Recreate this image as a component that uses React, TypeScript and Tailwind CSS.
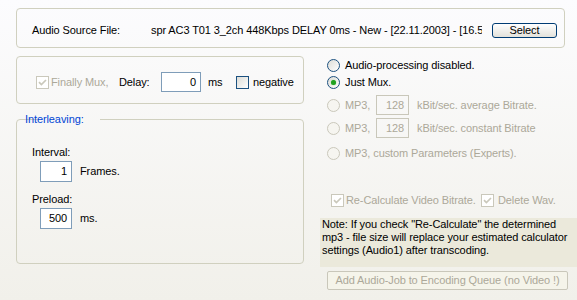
import React from 'react'

const gray = 'text-[#aca899]'

function Check({ checked, disabled }: { checked?: boolean; disabled?: boolean }) {
  return (
    <span
      className={`w-[13px] h-[13px] shrink-0 border flex items-center justify-center ${
        disabled ? 'border-[#cac8bb] bg-white' : 'border-[#1c5180] bg-gradient-to-br from-[#dcdcd7] to-white'
      }`}
    >
      {checked && (
        <svg width="9" height="9" viewBox="0 0 9 9">
          <path d="M1 4.2 L3.4 6.6 L8 2" fill="none" stroke={disabled ? '#cac8bb' : '#21a121'} strokeWidth="1.7" />
        </svg>
      )}
    </span>
  )
}

function Radio({ checked, disabled }: { checked?: boolean; disabled?: boolean }) {
  return (
    <span
      className={`w-[13px] h-[13px] shrink-0 rounded-full border flex items-center justify-center ${
        disabled ? 'border-[#cac8bb] bg-[#f6f5f0]' : 'border-[#1c5180] bg-gradient-to-br from-[#dcdcd7] to-white'
      }`}
    >
      {checked && <span className="w-[5px] h-[5px] rounded-full bg-[#21a121] shadow-[0_0_1px_#5fd35f]" />}
    </span>
  )
}

function Field({ value, w, h, disabled }: { value: string; w: string; h: string; disabled?: boolean }) {
  return (
    <span
      className={`${w} ${h} shrink-0 border flex items-center justify-end pr-[4px] ${
        disabled ? `border-[#c9c7ba] ${gray}` : 'border-[#7f9db9] bg-white'
      }`}
    >
      {value}
    </span>
  )
}

export default function App() {
  return (
    <div className="w-[577px] h-[300px] overflow-hidden pt-2 bg-gradient-to-b from-[#fcfcfe] to-[#f1f0ea] text-[11px] leading-[13px] tracking-[-0.1px] text-black font-['Liberation_Sans',Arial,sans-serif]">
      <div className="ml-4 w-[549px] h-10 border border-[#d0d0bf] rounded-[4px] flex items-center pt-[4px] pl-[15px]">
        <span className="w-[119px] shrink-0">Audio Source File:</span>
        <span className="w-[331px] shrink-0 overflow-hidden whitespace-nowrap">
          spr AC3 T01 3_2ch 448Kbps DELAY 0ms - New - [22.11.2003] - [16.5
        </span>
        <button className="ml-[10px] w-[65px] h-[15px] mt-[1px] rounded-[3px] border border-[#003c74] bg-gradient-to-b from-white to-[#e3e2db] flex items-center justify-center leading-none">
          Select
        </button>
      </div>

      <div className="flex">
        <div className="ml-4 w-[288px] shrink-0">
          <div className="mt-2 h-12 border border-[#d0d0bf] rounded-[4px] flex items-center pt-[4px] pl-[19px]">
            <Check checked disabled />
            <span className={`ml-[2px] w-[68px] ${gray}`}>Finally Mux,</span>
            <span className="w-[42px]">Delay:</span>
            <Field value="0" w="w-[40px]" h="h-[20px]" />
            <span className="ml-[7px] w-[28px]">ms</span>
            <Check />
            <span className="ml-[4px]">negative</span>
          </div>

          <fieldset className="mt-[9px] h-[151px] border border-[#d0d0bf] rounded-[4px] pl-[15px]">
            <legend className="ml-[7px] -translate-x-[15px] pl-[1px] pr-[1px] text-[#0046d5]">Interleaving:</legend>
            <div className="mt-[20px]">Interval:</div>
            <div className="mt-[2px] ml-2 flex items-center">
              <Field value="1" w="w-[32px]" h="h-[21px]" />
              <span className="ml-[8px]">Frames.</span>
            </div>
            <div className="mt-[11px]">Preload:</div>
            <div className="mt-[2px] ml-2 flex items-center">
              <Field value="500" w="w-[32px]" h="h-[21px]" />
              <span className="ml-[8px]">ms.</span>
            </div>
          </fieldset>
        </div>

        <div className="ml-4 w-[257px] shrink-0 flex flex-col">
          <div className="mt-[9px] h-4 pl-[7px] flex items-center">
            <Radio />
            <span className="ml-[5px]">Audio-processing disabled.</span>
          </div>
          <div className="mt-[1px] h-4 pl-[7px] flex items-center">
            <Radio checked />
            <span className="ml-[5px]">Just Mux.</span>
          </div>
          <div className={`mt-[5px] h-5 pl-[7px] flex items-center ${gray}`}>
            <Radio disabled />
            <span className="ml-[5px] w-[31px]">MP3,</span>
            <Field value="128" w="w-[33px]" h="h-[20px]" disabled />
            <span className="ml-[8px]">kBit/sec. average Bitrate.</span>
          </div>
          <div className={`mt-[3px] h-5 pl-[7px] flex items-center ${gray}`}>
            <Radio disabled />
            <span className="ml-[5px] w-[31px]">MP3,</span>
            <Field value="128" w="w-[33px]" h="h-[20px]" disabled />
            <span className="ml-[8px]">kBit/sec. constant Bitrate</span>
          </div>
          <div className={`mt-[7px] h-4 pl-[7px] flex items-center ${gray}`}>
            <Radio disabled />
            <span className="ml-[5px]">MP3, custom Parameters (Experts).</span>
          </div>

          <div className={`mt-[31px] h-4 pl-[11px] flex items-center ${gray}`}>
            <Check checked disabled />
            <span className="ml-[2px] w-[135px]">Re-Calculate Video Bitrate.</span>
            <Check checked disabled />
            <span className="ml-[4px]">Delete Wav.</span>
          </div>

          <div className="mt-[10px] h-[49px] w-[257px] bg-[#ebe9db] pl-[2px] whitespace-nowrap">
            Note: If you check "Re-Calculate" the determined
            <br />
            mp3 - file size will replace your estimated calculator
            <br />
            settings (Audio1) after transcoding.
          </div>

          <button
            className={`mt-1 ml-[7px] w-[241px] h-[19px] rounded-[2px] border border-[#c9c7ba] bg-[#f5f4ea] flex items-center justify-center ${gray}`}
          >
            Add Audio-Job to Encoding Queue (no Video !)
          </button>
        </div>
      </div>
    </div>
  )
}
